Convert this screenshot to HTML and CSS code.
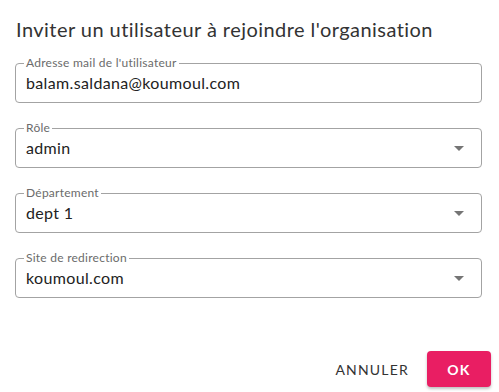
FILE: index.html
```html
<!DOCTYPE html>
<html lang="fr">
<head>
  <meta charset="UTF-8">
  <meta name="viewport" content="width=device-width, initial-scale=1">
  <title>Inviter un utilisateur</title>
  <link rel="stylesheet" href="styles.css">
</head>
<body>
  <div class="dialog">
    <h1 class="dialog-title">Inviter un utilisateur à rejoindre l'organisation</h1>
    <form class="dialog-content">
      <!-- Email -->
      <fieldset class="field">
        <legend>Adresse mail de l'utilisateur</legend>
        <div class="field-value">balam.saldana@koumoul.com</div>
      </fieldset>
      <!-- Role -->
      <fieldset class="field select">
        <legend>Rôle</legend>
        <div class="field-value">admin</div>
        <span class="arrow"></span>
      </fieldset>
      <!-- Department -->
      <fieldset class="field select">
        <legend>Département</legend>
        <div class="field-value">dept 1</div>
        <span class="arrow"></span>
      </fieldset>
      <!-- Redirect -->
      <fieldset class="field select">
        <legend>Site de redirection</legend>
        <div class="field-value">koumoul.com</div>
        <span class="arrow"></span>
      </fieldset>
    </form>
    <div class="dialog-actions">
      <button type="button" class="btn-text">Annuler</button>
      <button type="button" class="btn-primary">OK</button>
    </div>
  </div>
</body>
</html>
```

FILE: styles.css
```css
/* Page */
body {
  margin: 0;
  background: #fff;
  font-family: Lato, "Open Sans", sans-serif;
  color: #222;
}
.dialog {
  width: 499px;
  height: 392px;
  display: flex;
  flex-direction: column;
}
.dialog-title {
  margin: 0;
  padding: 17px 16px 0 16px;
  font-size: 20px;
  line-height: 24px;
  letter-spacing: 0.45px;
  font-weight: 400;
  color: #333;
}
.dialog-content {
  padding: 15px 17px 0 15px;
}

/* Outlined fields */
.field {
  margin: 0 0 18px 0;
  padding: 0 17px 0 10px;
  border: 1px solid #a3a3a3;
  border-radius: 4px;
  display: flex;
  align-items: center;
  min-width: 0;
}
.field legend {
  padding: 0 2px;
  margin-left: -2px;
  font-size: 12px;
  line-height: 14px;
  letter-spacing: 0.25px;
  color: #6b6b6b;
}
.field-value {
  flex: 1;
  padding: 2px 0 8px 0;
  font-size: 16px;
  line-height: 22px;
  letter-spacing: 0.35px;
  color: #222;
}
.arrow {
  width: 0;
  height: 0;
  margin-top: -6px;
  border-left: 5px solid transparent;
  border-right: 5px solid transparent;
  border-top: 5px solid #757575;
}

/* Actions */
.dialog-actions {
  margin-top: auto;
  padding: 0 8px 5px 0;
  display: flex;
  justify-content: flex-end;
  align-items: center;
  gap: 10px;
}
.btn-text,
.btn-primary {
  font-family: inherit;
  font-size: 14px;
  text-transform: uppercase;
  letter-spacing: 1.2px;
  border: none;
  border-radius: 4px;
  height: 36px;
  cursor: pointer;
}
.btn-text {
  background: none;
  color: #333;
  padding: 0 8px;
}
.btn-primary {
  background: #e91e63;
  color: #fff;
  font-weight: 700;
  width: 64px;
  box-shadow: 0 2px 3px rgba(0,0,0,0.25);
}
```
